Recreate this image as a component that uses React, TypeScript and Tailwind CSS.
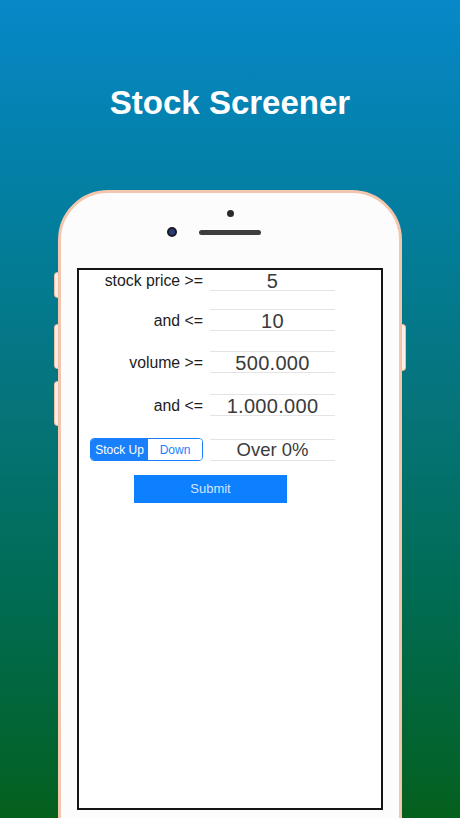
import React from "react";

const font = { fontFamily: '"Liberation Sans", Arial, sans-serif' };

function Field({ value, big = true }: { value: string; big?: boolean }) {
  return (
    <div
      className={`ml-[7px] flex h-[22px] w-[125px] items-center justify-center border-y border-[#e4e4e4] pt-[1px] text-[#3a3a3a] ${
        big ? "text-[20px] tracking-[0.3px]" : "text-[18.5px]"
      }`}
    >
      {value}
    </div>
  );
}

function Row({ label, value, className = "", big = true }: { label: string; value: string; className?: string; big?: boolean }) {
  return (
    <div className={`flex items-center ${className}`}>
      <div className="w-[124px] pt-[1px] text-right text-[15.8px] leading-none text-[#1c1c1c]">{label}</div>
      <Field value={value} big={big} />
    </div>
  );
}

export default function App() {
  return (
    <div
      className="relative h-[818px] w-[460px] overflow-hidden bg-gradient-to-b from-[#0888c8] via-[#067479] to-[#05601c]"
      style={font}
    >
      <div className="pt-[83px] text-center text-[33px] font-bold leading-[40px] text-white">Stock Screener</div>

      <div className="relative ml-[58px] mt-[67px] h-[720px] w-[344px] rounded-t-[50px] border-[3px] border-[#f2c7ae] bg-[#fcfcfc]">
        {/* side buttons */}
        <div className="absolute left-[-6px] top-[80px] h-[24px] w-[3px] rounded-l-sm bg-[#fbeee6] ring-1 ring-[#eec0a8]" />
        <div className="absolute left-[-6px] top-[132px] h-[43px] w-[3px] rounded-l-sm bg-[#fbeee6] ring-1 ring-[#eec0a8]" />
        <div className="absolute left-[-6px] top-[189px] h-[43px] w-[3px] rounded-l-sm bg-[#fbeee6] ring-1 ring-[#eec0a8]" />
        <div className="absolute right-[-6px] top-[132px] h-[45px] w-[3px] rounded-r-sm bg-[#fbeee6] ring-1 ring-[#eec0a8]" />

        <div className="flex flex-col items-center">
          <div className="mt-[17px] h-[7px] w-[7px] rounded-full bg-[#2a2a2a]" />
          <div className="mt-[10px] flex h-[10px] items-center">
            <div className="h-[10px] w-[10px] rounded-full border-[2px] border-[#1a1a22] bg-[#2b3a7a]" />
            <div className="ml-[22px] h-[5px] w-[62px] rounded-full bg-[#3e3e3e]" />
            <div className="ml-[32px] w-0" />
          </div>
        </div>

        <div className="mx-[16px] mt-[31px] h-[542px] overflow-hidden border-2 border-[#151515] bg-white">
          <div className="-mt-px flex flex-col">
            <Row label="stock price >=" value="5" />
            <Row label="and <=" value="10" className="mt-[18px]" />
            <Row label="volume >=" value="500.000" className="mt-[20px]" />
            <Row label="and <=" value="1.000.000" className="mt-[21px]" />
            <div className="mt-[22px] flex items-center">
              <div className="flex w-[124px] justify-end">
                <div className="flex h-[23px] w-[113px] overflow-hidden rounded-[4px] border border-[#1a7ffb] text-[12px]">
                  <div className="flex w-[57px] items-center justify-center bg-[#1a7ffb] text-white">Stock Up</div>
                  <div className="flex flex-1 items-center justify-center bg-white text-[#1a7ffb]">Down</div>
                </div>
              </div>
              <Field value="Over 0%" big={false} />
            </div>
            <div className="ml-[55px] mt-[14px] flex h-[28px] w-[153px] items-center justify-center bg-[#0d80ff] text-[13px] text-[#d2e6ff]">
              Submit
            </div>
          </div>
        </div>
      </div>
    </div>
  );
}
